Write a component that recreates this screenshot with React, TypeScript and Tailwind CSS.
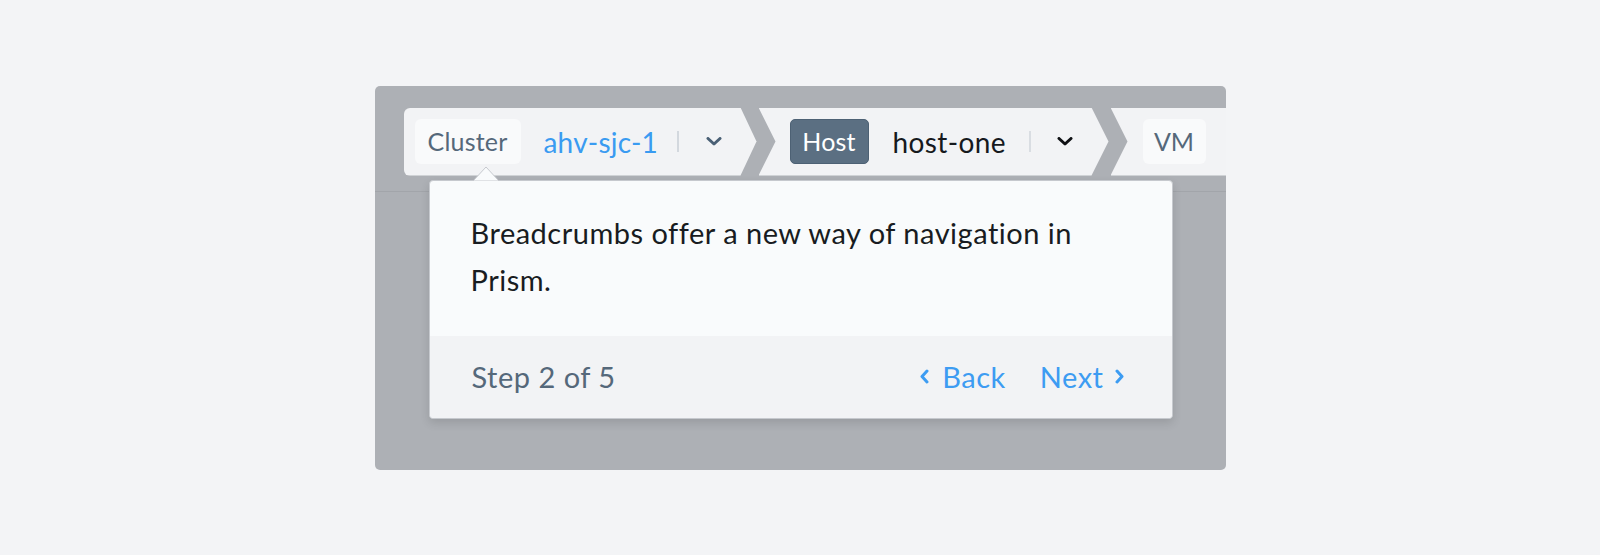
import React from 'react';

const FONT = "font-['Lato','Open_Sans',sans-serif]";

const DownChevron: React.FC<{ color: string }> = ({ color }) => (
  <svg width="16" height="9" viewBox="0 0 16 9" fill="none">
    <polyline points="2,1.5 8,7 14,1.5" stroke={color} strokeWidth="3" strokeLinecap="round" strokeLinejoin="round" />
  </svg>
);

const SideChevron: React.FC<{ dir: 'left' | 'right' }> = ({ dir }) => (
  <svg width="9" height="15" viewBox="0 0 9 15" fill="none">
    <polyline
      points={dir === 'left' ? '7,2 2,7.5 7,13' : '2,2 7,7.5 2,13'}
      stroke="#3d9cf2"
      strokeWidth="3"
      strokeLinecap="round"
      strokeLinejoin="round"
    />
  </svg>
);

const App: React.FC = () => {
  return (
    <div className={`w-full h-[555px] bg-[#f3f4f6] flex items-center justify-center ${FONT}`}>
      <div className="relative w-[851px] h-[384px] rounded-[5px] bg-[#adb0b5] overflow-hidden">
        {/* breadcrumb header */}
        <div className="h-[106px] border-b border-[#a2a5aa] pt-[22px] pl-[29px]">
          <div className="flex gap-[2px] h-[68px]">
            {/* Cluster */}
            <div className="shrink-0 w-[353px] h-full bg-[#f2f3f5] rounded-l-[6px] [clip-path:polygon(0_0,337px_0,100%_50%,337px_100%,0_100%)] flex items-center pl-[11px]">
              <span className="w-[106px] h-[45px] rounded-[6px] bg-[#f9fafb] flex items-center justify-center text-[25px] tracking-[0.2px] text-[#55687a]">
                Cluster
              </span>
              <span className="ml-[23px] w-[110px] text-[28px] tracking-[0.2px] text-[#3a9bf1] whitespace-nowrap">ahv-sjc-1</span>
              <span className="ml-[23px] w-[2px] h-[21px] bg-[#d3d8de]" />
              <span className="ml-[27px] flex"><DownChevron color="#4a6075" /></span>
            </div>
            {/* Host */}
            <div className="shrink-0 w-[350px] h-full bg-[#f2f3f5] [clip-path:polygon(0_0,333px_0,100%_50%,333px_100%,0_100%,17px_50%)] flex items-center pl-[31px]">
              <span className="w-[79px] h-[45px] rounded-[5px] bg-[#5b6f82] border border-[#4d6174] flex items-center justify-center text-[25px] tracking-[0.2px] text-white">
                Host
              </span>
              <span className="ml-[24px] w-[113px] text-[28px] tracking-[0.4px] text-[#16191d] whitespace-nowrap">host-one</span>
              <span className="ml-[23px] w-[2px] h-[21px] bg-[#d9dde2]" />
              <span className="ml-[26px] flex"><DownChevron color="#0f1114" /></span>
            </div>
            {/* VM */}
            <div className="shrink-0 w-[200px] h-full bg-[#f2f3f5] [clip-path:polygon(0_0,100%_0,100%_100%,0_100%,17px_50%)] flex items-center pl-[32px]">
              <span className="w-[63px] h-[45px] rounded-[6px] bg-[#f9fafb] flex items-center justify-center text-[25px] text-[#55687a]">
                VM
              </span>
            </div>
          </div>
        </div>

        {/* onboarding popover */}
        <div className="absolute left-[54px] top-[94px] w-[744px] h-[239px] rounded-[4px] border border-[#c6c9ce] bg-[#f9fbfc] shadow-[0_4px_10px_rgba(0,0,0,0.12)] flex flex-col">
          <svg className="absolute left-[43px] top-[-15px]" width="26" height="16" viewBox="0 0 26 16">
            <polygon points="0,15 13,1 26,15" fill="#f9fbfc" stroke="#c6c9ce" strokeWidth="1" />
            <rect x="0" y="15" width="26" height="2" fill="#f9fbfc" />
          </svg>
          <div className="h-[155px] pl-[41px] pt-[28px] text-[29px] tracking-[0.5px] leading-[47px] text-[#181c21]">
            Breadcrumbs offer a new way of navigation in
            <br />
            Prism.
          </div>
          <div className="flex-1 bg-[#f2f3f5] rounded-b-[4px] flex items-center justify-between pl-[42px] pr-[48px] text-[29px] tracking-[0.5px]">
            <span className="text-[#55687a]">Step 2 of 5</span>
            <div className="flex items-center text-[#3d9cf2]">
              <span className="flex items-center gap-[13px]">
                <SideChevron dir="left" />
                Back
              </span>
              <span className="ml-[34px] flex items-center gap-[11px]">
                Next
                <SideChevron dir="right" />
              </span>
            </div>
          </div>
        </div>
      </div>
    </div>
  );
};

export default App;
